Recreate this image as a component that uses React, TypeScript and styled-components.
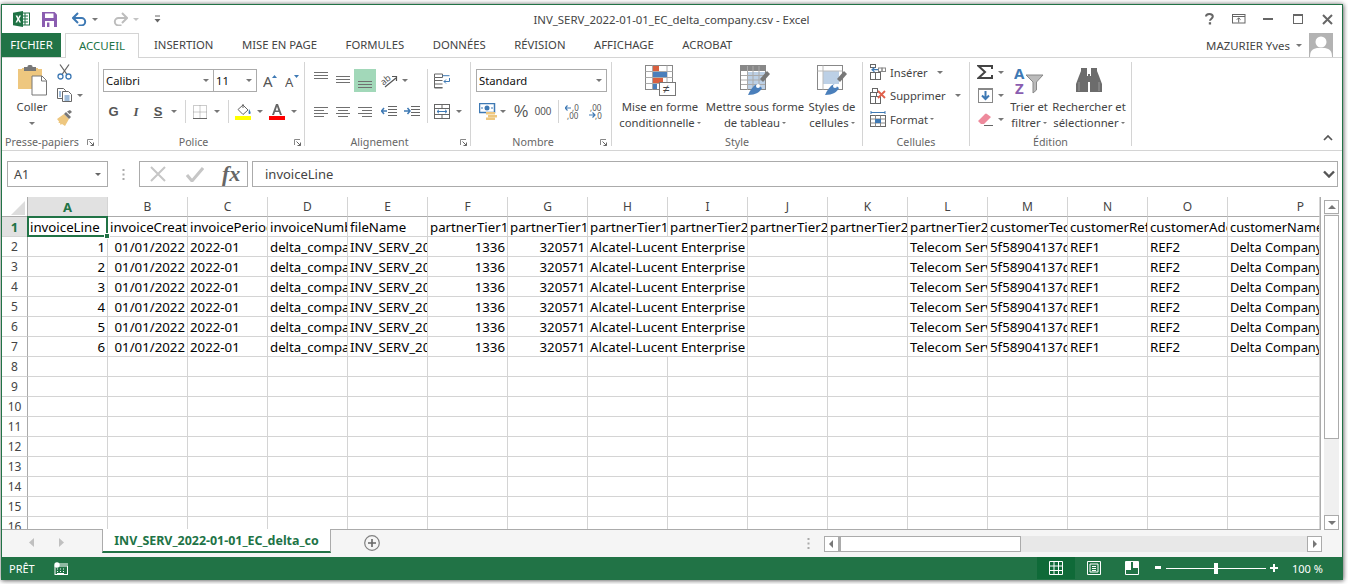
import React from "react";
import styled, { createGlobalStyle } from "styled-components";

const Global = createGlobalStyle`
  html, body { margin: 0; padding: 0; background: #fff; overflow: hidden; }
  body { font-family: "Noto Sans", "Open Sans", Arial, sans-serif; }
  * { box-sizing: border-box; }
`;

const GREEN = "#217346";
const LINE = "#d4d4d4";
const EDGE = "#ababab";

const Page = styled.div`width: 1348px; height: 584px; padding: 4px 5px 4px 1px; background: #fff;`;
const Win = styled.div`
  width: 1342px; height: 576px; border: 1px solid ${GREEN}; background: #fff;
  box-shadow: 0 0 5px rgba(0,0,0,.45), 1px 1px 4px rgba(0,0,0,.3);
  display: flex; flex-direction: column; overflow: hidden;
`;

/* ---------- title bar ---------- */
const TitleBar = styled.div`height: 28px; display: grid; grid-template-columns: 1fr auto 1fr; align-items: center; flex: none;`;
const Quick = styled.div`display: flex; align-items: center; padding-left: 8px;`;
const TitleText = styled.div`font-size: 11.4px; color: #444; padding-right: 1px; white-space: nowrap;`;
const WinBtns = styled.div`display: flex; justify-content: flex-end; align-items: center; padding-right: 0;`;

const Slot = styled.span<{ $w: number; $h?: number; $pt?: number; $pb?: number }>`
  width: ${p => p.$w}px; height: ${p => p.$h ?? 23}px; flex: none;
  padding-top: ${p => p.$pt ?? 0}px; padding-bottom: ${p => p.$pb ?? 0}px;
  display: inline-flex; align-items: center; justify-content: center; position: relative;
`;
const Highlight = styled(Slot)`background: #a2d8b9;`;
const Caret = styled.i<{ $c?: string; $ml?: number; $s?: number }>`
  display: inline-block; width: 0; height: 0; flex: none;
  margin-left: ${p => p.$ml ?? 0}px;
  border-left: ${p => p.$s ?? 3.5}px solid transparent; border-right: ${p => p.$s ?? 3.5}px solid transparent;
  border-top: ${p => p.$s ?? 3.5}px solid ${p => p.$c ?? "#777"};
`;
const VRule = styled.span<{ $h?: number }>`width: 1px; height: ${p => p.$h ?? 23}px; background: ${LINE}; flex: none;`;

/* ---------- tabs ---------- */
const TabBar = styled.div`height: 25px; flex: none; display: flex; align-items: flex-start; border-bottom: 1px solid ${LINE}; position: relative;`;
const FileTab = styled.div`width: 59px; height: 24px; padding-bottom: 1px; background: ${GREEN}; color: #fff; font-size: 11.3px; display: flex; align-items: center; justify-content: center; flex: none;`;
const ActiveTab = styled.div`
  width: 74px; height: 25px; padding-bottom: 2px; margin-left: 4px; margin-right: 15px; flex: none; background: #fff; color: ${GREEN};
  border: 1px solid ${LINE}; border-bottom: none; font-size: 11.5px; display: flex; align-items: center; justify-content: center;
  position: relative; z-index: 1;
`;
const Tab = styled.div`height: 24px; padding-bottom: 1px; margin-right: 28.5px; font-size: 11.3px; color: #444; display: flex; align-items: center; white-space: nowrap; flex: none;`;
const User = styled.div`margin-left: auto; display: flex; align-items: center; height: 24px; padding-right: 9px; font-size: 11.4px; color: #444;`;
const Avatar = styled.span`width: 24px; height: 24px; background: #b3b3b3; margin-left: 7px; display: block; overflow: hidden; flex: none;`;

/* ---------- ribbon ---------- */
const Ribbon = styled.div`height: 93px; flex: none; display: flex; border-bottom: 1px solid ${LINE}; align-items: flex-start;`;
const Group = styled.div<{ $w: number; $pl?: number }>`
  width: ${p => p.$w}px; height: 84px; margin-top: 4px; flex: none;
  border-right: 1px solid ${LINE}; padding-left: ${p => p.$pl ?? 0}px;
  display: flex; flex-direction: column;
`;
const GroupBody = styled.div<{ $pt?: number }>`flex: 1; display: flex; padding-top: ${p => p.$pt ?? 0}px; min-height: 0;`;
const Stack = styled.div<{ $gap?: number }>`display: flex; flex-direction: column; gap: ${p => p.$gap ?? 8}px; flex: none;`;
const Row = styled.div`display: flex; align-items: center; height: 23px; flex: none;`;
const MiniRow = styled.div`display: flex; align-items: center; height: 20px; flex: none;`;
const GroupLabel = styled.div<{ $ml?: number }>`
  height: 16px; margin-bottom: -4px; margin-left: ${p => p.$ml ?? 0}px; font-size: 10.7px; line-height: 16px; color: #666;
  display: grid; grid-template-columns: minmax(0, 1fr) auto minmax(0, 1fr); align-items: center; white-space: nowrap;
`;
const LabelText = styled.span<{ $mr?: number }>`margin-right: ${p => p.$mr ?? 0}px;`;
const Launcher = styled.span<{ $mr?: number }>`justify-self: end; margin-right: ${p => p.$mr ?? 4}px; width: 7px; height: 7px; display: block; line-height: 0;`;
const BigBtn = styled.div<{ $w: number }>`
  width: ${p => p.$w}px; flex: none; display: flex; flex-direction: column; align-items: center;
  font-size: 11.3px; line-height: 16px; color: #444; white-space: nowrap;
`;
const BigIcon = styled.div`height: 36px; display: flex; align-items: center; justify-content: center; flex: none;`;
const BigLine = styled.div<{ $mt?: number }>`display: flex; align-items: center; height: 16px; margin-top: ${p => p.$mt ?? 0}px;`;
const Combo = styled.div<{ $w: number; $ml?: number }>`
  width: ${p => p.$w}px; height: 23px; margin-left: ${p => p.$ml ?? 0}px; flex: none; border: 1px solid ${EDGE}; background: #fff;
  display: flex; align-items: center; justify-content: space-between; padding: 0 4px 0 2px;
  font-size: 11.3px; color: #111;
`;
const CellAction = styled.div`display: flex; align-items: center; height: 20px; font-size: 11.2px; color: #444; flex: none;`;
const ActionText = styled.span`margin-left: 4px; white-space: nowrap;`;
const Collapse = styled.div`margin-left: auto; margin-top: 77px; margin-right: 9px; line-height: 0; flex: none;`;

/* ---------- formula bar ---------- */
const FormulaBar = styled.div`height: 46px; flex: none; padding: 10px 4px 10px 5px; display: flex; align-items: stretch;`;
const NameBox = styled.div`width: 101px; border: 1px solid ${EDGE}; padding: 0 6px; display: flex; align-items: center; justify-content: space-between; font-size: 12.5px; color: #444; flex: none;`;
const Dots = styled.div`width: 31px; display: flex; align-items: center; justify-content: center; flex: none;`;
const FxBox = styled.div`width: 109px; border: 1px solid ${EDGE}; display: flex; align-items: center; flex: none; padding-left: 9px; gap: 19px;`;
const FxMark = styled.span`font-family: "Liberation Serif", serif; font-style: italic; font-weight: 700; font-size: 22px; color: #666; line-height: 1; margin-left: -1px;`;
const Input = styled.div`flex: 1; margin-left: 4px; border: 1px solid ${EDGE}; display: flex; align-items: center; justify-content: space-between; padding: 0 2px 0 12px; font-size: 13px; color: #444;`;

/* ---------- sheet ---------- */
const SheetArea = styled.div`flex: 1; min-height: 0; display: flex;`;
const Sheet = styled.div`
  width: 1319px; flex: none; overflow: hidden; border-right: 1px solid ${EDGE}; border-bottom: 1px solid ${EDGE};
  display: grid; grid-template-columns: 26px repeat(15, 80px) 92px; grid-auto-rows: 20px;
  font-size: 13.25px; color: #000; align-content: start;
`;
const Corner = styled.div`border-right: 1px solid ${EDGE}; border-bottom: 1px solid ${EDGE}; display: flex; align-items: flex-end; justify-content: flex-end; padding: 0 2px 1px 0;`;
const ColHead = styled.div<{ $on?: boolean; $pl?: number }>`
  border-right: 1px solid ${LINE}; border-bottom: 1px solid ${EDGE}; display: flex; align-items: center; justify-content: center;
  padding-left: ${p => p.$pl ?? 0}px;
  font-size: ${p => p.$on ? 13 : 12}px; color: ${p => p.$on ? GREEN : "#444"}; font-weight: ${p => p.$on ? 700 : 400}; background: ${p => p.$on ? "#e1e1e1" : "#fff"};
`;
const RowHead = styled.div<{ $on?: boolean }>`
  border-right: 1px solid ${EDGE}; border-bottom: 1px solid ${LINE}; display: flex; align-items: center; justify-content: center;
  font-size: ${p => p.$on ? 13 : 12}px; color: ${p => p.$on ? GREEN : "#444"}; font-weight: ${p => p.$on ? 700 : 400}; background: ${p => p.$on ? "#e1e1e1" : "#fff"};
`;
const Cell = styled.div<{ $right?: boolean; $span?: number; $sel?: boolean }>`
  grid-column: span ${p => p.$span ?? 1};
  border-right: 1px solid ${LINE}; border-bottom: 1px solid ${LINE}; overflow: hidden; white-space: nowrap;
  padding: 0 ${p => p.$right ? 2 : 0}px 0 ${p => p.$right ? 0 : 2}px; line-height: 20px;
  text-align: ${p => p.$right ? "right" : "left"};
  ${p => p.$sel && `overflow: visible; position: relative; z-index: 2;`}
`;
const LastCell = styled(Cell)`font-size: 12.8px;`;
const CellClip = styled.span`display: block; overflow: hidden;`;
const SelBox = styled.span`position: absolute; left: -1px; top: -1px; right: -1px; bottom: -1px; border: 2px solid ${GREEN}; pointer-events: none;`;
const SelHandle = styled.span`position: absolute; right: -3px; bottom: -3px; width: 6px; height: 6px; background: ${GREEN}; border: 1px solid #fff;`;

const VScroll = styled.div`width: 21px; flex: none; padding: 3px 3px 0 3px; display: flex; flex-direction: column; background: #fff;`;
const ScrollTrackV = styled.div`flex: 1; background: #f0f0f0; display: flex; flex-direction: column; width: 15px;`;
const ScrollBtn = styled.div<{ $w: number; $h: number }>`
  width: ${p => p.$w}px; height: ${p => p.$h}px; flex: none; background: #fff; border: 1px solid ${EDGE};
  display: flex; align-items: center; justify-content: center;
`;
const ThumbV = styled.div`height: 224px; margin-top: 1px; background: #fff; border: 1px solid ${EDGE}; flex: none;`;
const SpacerV = styled.div`flex: 1;`;

/* ---------- sheet tabs ---------- */
const TabsBar = styled.div`height: 27px; flex: none; background: #f5f5f5; display: flex; align-items: flex-start;`;
const NavArrows = styled.div`width: 100px; height: 24px; display: flex; align-items: center; padding-left: 26px; gap: 25px; flex: none;`;
const SheetTab = styled.div`
  width: 229px; height: 24px; margin-top: -1px; flex: none; background: #fff; border-left: 1px solid ${EDGE}; border-right: 1px solid ${EDGE};
  border-bottom: 2px solid ${GREEN}; color: ${GREEN}; font-weight: 700; font-size: 12.45px;
  display: flex; align-items: center; justify-content: center; white-space: nowrap;
`;
const AddSheet = styled.div`width: 84px; height: 26px; display: flex; align-items: center; padding-left: 33px; flex: none;`;
const Middle = styled.div`flex: 1; height: 26px; display: flex; align-items: center; justify-content: flex-end; padding-right: 14px;`;
const HScroll = styled.div`width: 498px; height: 16px; margin-top: 6px; margin-right: 20px; flex: none; background: #e8e8e8; display: flex; align-items: stretch;`;
const ThumbH = styled.div`width: 182px; background: #fff; border: 1px solid ${EDGE}; border-left-width: 2px; flex: none;`;
const SpacerH = styled.div`flex: 1;`;

/* ---------- status bar ---------- */
const Status = styled.div`height: 22px; flex: none; background: ${GREEN}; color: #fff; display: flex; align-items: center; padding-left: 7px; font-size: 11px;`;
const StatusRight = styled.div`margin-left: auto; display: flex; align-items: center; height: 22px;`;
const ViewBtn = styled.div<{ $on?: boolean }>`width: 38px; height: 22px; display: flex; align-items: center; justify-content: center; background: ${p => p.$on ? "#0f6a38" : "transparent"}; flex: none;`;
const SliderTrack = styled.div`width: 100px; height: 1px; background: #fff; position: relative; flex: none; margin: 0 4px;`;
const SliderThumb = styled.span`position: absolute; left: 48px; top: -5px; width: 4px; height: 11px; background: #fff;`;
const ZoomPct = styled.span`width: 64px; padding-left: 14px; font-size: 11px; white-space: nowrap;`;

/* ---------- icons ---------- */
const Svg = ({ w, h, children }: { w: number; h: number; children: React.ReactNode }) => (
  <svg width={w} height={h} viewBox={`0 0 ${w} ${h}`} fill="none" style={{ display: "block", flex: "none" }}>{children}</svg>
);

const ExcelLogo = () => (
  <Svg w={17} h={16}>
    <rect x="7" y="2" width="9.5" height="12" fill="#fff" stroke="#1f7244" />
    <path d="M9 5h6M9 8h6M9 11h6M12 2v12" stroke="#1f7244" />
    <path d="M0 1.8 10 0v16L0 14.2z" fill="#1f7244" />
    <path d="M2.6 4.6h1.8L5.3 6.7 6.3 4.6H8L6.2 8 8 11.4H6.3L5.2 9.2 4.2 11.4H2.5L4.4 8z" fill="#fff" />
  </Svg>
);
const SaveIcon = () => (
  <Svg w={15} h={15}>
    <path d="M0 0h12.5L15 2.5V15H0z" fill="#8a5db0" />
    <rect x="3" y="1.5" width="8.5" height="4.5" fill="#fff" />
    <rect x="3" y="9" width="9" height="6" fill="#fff" />
    <rect x="5" y="10.5" width="2.4" height="4.5" fill="#8a5db0" />
  </Svg>
);
const UndoIcon = ({ c, flip }: { c: string; flip?: boolean }) => (
  <Svg w={15} h={14}>
    <g transform={flip ? "translate(15 0) scale(-1 1)" : undefined}>
      <path d="M2 6h7.5a3.7 3.7 0 0 1 0 7.4H6.5" stroke={c} strokeWidth="2" />
      <path d="M6 1 1 6l5 5" stroke={c} strokeWidth="2" />
    </g>
  </Svg>
);
const Custom = () => (
  <Svg w={7} h={8}><path d="M1 1h5" stroke="#666" /><path d="M.5 4h6L3.5 7.5z" fill="#666" /></Svg>
);
const HelpMark = () => (
  <Svg w={9} h={12}><path d="M1 3.5C1 1.8 2.5 1 4.3 1 6.3 1 7.8 2 7.8 3.6c0 2-2.8 2.2-2.8 4.2" stroke="#666" strokeWidth="2" /><rect x="3.8" y="9.2" width="2.3" height="2.3" fill="#666" /></Svg>
);
const RibbonMode = () => (
  <Svg w={14} h={10}><rect x=".5" y=".5" width="12.5" height="8.5" stroke="#666" /><path d="M1 2.5h12" stroke="#666" /><path d="M6.7 8.5V4M4.8 5.7l1.9-1.9 1.9 1.9" stroke="#666" /></Svg>
);
const MinIcon = () => <Svg w={10} h={3}><rect y="0" width="10" height="2" fill="#666" /></Svg>;
const MaxIcon = () => <Svg w={10} h={10}><rect x=".5" y=".5" width="9" height="9" stroke="#666" /><rect x="0" y="0" width="10" height="2" fill="#666" /></Svg>;
const CloseIcon = () => <Svg w={11} h={11}><path d="m1 1 9 9M10 1l-9 9" stroke="#666" strokeWidth="2" /></Svg>;
const AvatarArt = () => (
  <svg width="24" height="24" viewBox="0 0 24 24" style={{ display: "block" }}>
    <circle cx="12" cy="9" r="5.5" fill="#fff" /><path d="M1 24c0-6 2-8 7-9h8c5 1 7 3 7 9z" fill="#fff" />
  </svg>
);

const PasteIcon = () => (
  <Svg w={29} h={31}>
    <path d="M0 4h4v-1h16v1h4v20H0z" fill="#eec77f" />
    <rect x="6" y="2" width="12" height="4" fill="#777" /><rect x="9.5" y="0" width="5" height="3.5" rx="1.5" fill="#777" />
    <path d="M14 11h10l4.500 4.500V30H14z" fill="#fff" stroke="#777" />
    <path d="M23.500 11v5h5" stroke="#777" />
  </Svg>
);
const Scissors = () => (
  <Svg w={15} h={16}>
    <path d="M3 .5 10 10.500M12 .500 5 10.500" stroke="#666" strokeWidth="1.3" />
    <circle cx="3.500" cy="12.500" r="2.500" stroke="#3e79b4" strokeWidth="1.3" /><circle cx="11.500" cy="12.500" r="2.500" stroke="#3e79b4" strokeWidth="1.3" />
  </Svg>
);
const CopyIcon = () => (
  <Svg w={15} h={14}>
    <path d="M.5.5h6l2 2v8H.5z" fill="#fff" stroke="#666" />
    <path d="M5.500 3.500h6l3 3v7h-9z" fill="#fff" stroke="#666" />
    <path d="M2 4h2M2 6h2M2 8h2M7.500 8h5M7.500 10h5M7.500 12h5" stroke="#3e79b4" />
  </Svg>
);
const Brush = () => (
  <Svg w={16} h={16}>
    <path d="M0 9 7 4l5 5-4 7-3-2-1.500 1-.5-2-1.500 0 .5-1.500z" fill="#eec77f" />
    <path d="m7 4 5 5 2-2-5-5z" fill="#777" /><path d="m10 1.500 2.500 2.500 2.500-2L13 0z" fill="#777" />
  </Svg>
);
const BigA = ({ s, dir }: { s: number; dir: "up" | "down" }) => (
  <Svg w={15} h={14}>
    <text x="0" y="13" fontSize={s} fill="#555" fontFamily="Noto Sans, sans-serif">A</text>
    <path d={dir === "up" ? "M9 4l2.500-3L14 4z" : "M9 1h5l-2.500 3z"} fill="#3e79b4" />
  </Svg>
);
const Glyph = styled.span<{ $i?: boolean; $u?: boolean }>`
  font-size: 13px; font-weight: 700; color: #555; line-height: 1;
  font-style: ${p => p.$i ? "italic" : "normal"}; text-decoration: ${p => p.$u ? "underline" : "none"};
  font-family: ${p => p.$i ? '"Liberation Serif", serif' : '"Liberation Sans", Arial, sans-serif'};
`;
const BorderIcon = () => (
  <Svg w={14} h={14}><path d="M.5.500h13v13H.5zM7 .5v13M.5 7h13" stroke="#999" strokeDasharray="1 1" /><path d="M0 13.500h14" stroke="#666" /></Svg>
);
const FillIcon = () => (
  <Svg w={17} h={17}>
    <path d="M3 6.500 8 2l5 5-5 4.500z" fill="#fff" stroke="#666" /><path d="M8 1v4" stroke="#666" />
    <path d="M14 6c1 2 2 3 1.500 4.500-.7 1-2 .500-2-.7z" fill="#3e79b4" />
    <rect y="13" width="16" height="4" fill="#ffff00" />
  </Svg>
);
const FontColor = () => (
  <Svg w={16} h={17}>
    <path d="M3 12 7 1h2l4 11h-2l-1-3H6l-1 3zM6.700 7.500h2.600L8 3.500z" fill="#666" />
    <rect y="13" width="16" height="4" fill="#ff0000" />
  </Svg>
);
const Lines = ({ ws, dy = 3, c = "#707070" }: { ws: [number, number][]; dy?: number; c?: string }) => (
  <Svg w={15} h={Math.ceil((ws.length - 1) * dy + 1)}>
    {ws.map(([x, w], i) => <path key={i} d={`M${x} ${i * dy + .5}h${w}`} stroke={c} />)}
  </Svg>
);
const LinesV: [number, number][] = [[0, 14], [0, 14], [0, 14]];
const LinesLeft: [number, number][] = [[0, 14], [0, 10], [0, 14], [0, 10]];
const LinesCenter: [number, number][] = [[0, 14], [2, 10], [0, 14], [2, 10]];
const LinesRight: [number, number][] = [[0, 14], [4, 10], [0, 14], [4, 10]];
const Orient = () => (
  <Svg w={17} h={16}>
    <text x="0" y="10" fontSize="9" fill="#555" transform="rotate(-40 5 8)" fontFamily="Noto Sans, sans-serif">ab</text>
    <path d="M4 14 15 5M11 3.500h4.500V8" stroke="#555" strokeWidth="1.200" />
  </Svg>
);
const Indent = ({ rev }: { rev?: boolean }) => (
  <Svg w={16} h={11}>
    {rev
      ? <><path d="M7 .5h9M7 3.500h9M7 6.500h9M7 9.500h9" stroke="#666" /><path d="M0 5h6M3 2 .5 5 3 8" stroke="#3e79b4" strokeWidth="1.500" /></>
      : <><path d="M7 .5h9M7 3.500h9M7 6.500h9M7 9.500h9" stroke="#666" /><path d="M0 5h6M3.500 2 6 5 3.500 8" stroke="#3e79b4" strokeWidth="1.500" /></>}
  </Svg>
);
const WrapIcon = () => (
  <Svg w={16} h={16}>
    <path d="M.5 1h8v3.500h-8zM.5 7.500h8M.5 11h8M.5 14.500h8" stroke="#666" /><path d="M.5 4.500v10.500h8" stroke="#666" />
    <path d="M8.500 2.700h7" stroke="#3e79b4" />
    <path d="M15.500 5v3.500H10M12 6.500l-2 2 2 2" stroke="#3e79b4" />
  </Svg>
);
const MergeIcon = () => (
  <Svg w={16} h={15}>
    <rect x=".5" y=".5" width="15" height="14" stroke="#666" /><path d="M.5 4.500h15M.5 10.500h15M8 .5v4M8 10.500v4" stroke="#666" />
    <path d="M3 7.500h10M5 5.800 3 7.500l2 1.700M11 5.800l2 1.700-2 1.700" stroke="#3e79b4" />
  </Svg>
);
const Currency = () => (
  <Svg w={18} h={17}>
    <rect x=".5" y=".5" width="15" height="9" stroke="#3e79b4" strokeWidth="1.500" />
    <circle cx="8" cy="5" r="2.500" fill="#3e79b4" /><path d="M2 5h2M12 5h2" stroke="#3e79b4" />
    <rect x="7" y="9" width="9" height="2.500" fill="#eec77f" /><rect x="9" y="12" width="9" height="2.500" fill="#eec77f" /><rect x="7" y="14.500" width="9" height="2.500" fill="#eec77f" />
  </Svg>
);
const PctText = styled.span`font-size: 16px; color: #555; line-height: 1; font-family: "Liberation Sans", sans-serif;`;
const ThouText = styled.span`font-size: 10px; color: #555; line-height: 1; font-family: "Liberation Sans", sans-serif;`;
const DecIcon = ({ inc }: { inc?: boolean }) => (
  <Svg w={16} h={16}>
    <text x={inc ? 7 : 2} y="7" fontSize="8" fill="#555" fontFamily="Noto Sans, sans-serif">{inc ? ",0" : ",00"}</text>
    <text x={inc ? 2 : 7} y="15" fontSize="8" fill="#555" fontFamily="Noto Sans, sans-serif">{inc ? ",00" : ",0"}</text>
    {inc
      ? <path d="M0 4h6M2.500 1.500 0 4l2.500 2.500" stroke="#3e79b4" strokeWidth="1.200" />
      : <path d="M1 11h6M4.500 8.500 7 11l-2.500 2.500" stroke="#3e79b4" strokeWidth="1.200" />}
  </Svg>
);
const CondFmt = () => (
  <Svg w={31} h={31}>
    <rect x=".5" y=".5" width="27" height="24" fill="#fff" stroke="#888" />
    <path d="M.5 6.500h27M.5 12.500h27M.5 18.500h27M7.500.5v24M22 .5v24" stroke="#aaa" />
    <rect x="8" y="1" width="6" height="5" fill="#d9603f" /><rect x="8" y="7" width="14" height="5" fill="#4a7fbb" />
    <rect x="8" y="13" width="10" height="5" fill="#d9603f" /><rect x="8" y="19" width="4" height="5" fill="#4a7fbb" />
    <rect x="14.500" y="17.500" width="16" height="13" fill="#fff" stroke="#777" />
    <text x="18" y="28" fontSize="12" fill="#444" fontFamily="Liberation Sans, sans-serif">≠</text>
  </Svg>
);
const TableFmt = ({ plain }: { plain?: boolean }) => (
  <Svg w={30} h={31}>
    <rect x=".5" y=".5" width="25" height="24" fill="#fff" stroke="#888" />
    {plain
      ? <><rect x="6" y="6" width="16" height="13" fill="#bcd0e6" /><path d="M.5 6h25M6 .5v24" stroke="#bbb" /></>
      : <><rect x="1" y="1" width="24" height="5" fill="#888" /><rect x="8" y="7" width="17" height="17" fill="#bcd0e6" /><path d="M1 10.500h24M1 15h24M1 19.500h24M7.500 1v24M13 1v24M19 1v24" stroke="#aaa" /></>}
    <path d="M20 14 27 6l3 3-7 8z" fill="#777" />
    <path d="M8 30c2-5 5-9 9-11l5 4c-2 4-6 7-14 7z" fill="#4a7fbb" />
    <circle cx="18" cy="21" r="2" fill="#fff" />
  </Svg>
);
const InsertIcon = () => (
  <Svg w={16} h={16}>
    <rect x=".5" y="8.500" width="5" height="7" stroke="#666" /><rect x="5.500" y="8.500" width="5" height="7" stroke="#666" />
    <rect x=".5" y=".5" width="5" height="3" stroke="#666" /><rect x="8.500" y="4" width="3.500" height="3.500" stroke="#888" /><rect x="12" y="4" width="3.500" height="3.500" stroke="#888" />
    <path d="M2 5.700h6M4.500 3.500 2 5.700l2.500 2.200" stroke="#3e79b4" strokeWidth="1.200" />
  </Svg>
);
const DeleteIcon = () => (
  <Svg w={16} h={16}>
    <rect x=".5" y="8.500" width="5" height="7" stroke="#666" /><rect x="5.500" y="8.500" width="5" height="7" stroke="#666" />
    <rect x="2.500" y=".5" width="5" height="4" stroke="#666" /><rect x=".5" y="4.500" width="6" height="4" stroke="#666" />
    <path d="m8 3 7 7M15 3l-7 7" stroke="#e0604c" strokeWidth="1.800" />
  </Svg>
);
const FormatIcon = () => (
  <Svg w={16} h={16}>
    <rect x=".5" y="4.500" width="15" height="11" fill="#fff" stroke="#666" /><path d="M.5 8h15M.5 12h15M5.500 4.500v11M10.500 4.500v11" stroke="#888" />
    <rect x="5" y="8" width="6" height="4" fill="#3e79b4" />
    <path d="M1 1.500h14" stroke="#3e79b4" /><path d="M1 0v3M15 0v3" stroke="#3e79b4" />
  </Svg>
);
const Sigma = () => <Svg w={16} h={14}><path d="M15 4V1H1.500L8 7 1.500 13H15v-3" stroke="#444" strokeWidth="2" /></Svg>;
const FillDown = () => (
  <Svg w={15} h={15}>
    <rect x=".5" y=".5" width="14" height="14" fill="#fff" stroke="#888" /><path d="M0 1h15" stroke="#888" strokeWidth="2" />
    <path d="M7.500 3v8M4 7.500 7.500 11 11 7.500" stroke="#3e79b4" strokeWidth="2" />
  </Svg>
);
const Eraser = () => (
  <Svg w={15} h={13}>
    <path d="M0 8 7 1a1.500 1.500 0 0 1 2 0l4 3-7 7H3z" fill="#ee8a9c" />
    <path d="M6 12.500h9" stroke="#666" />
  </Svg>
);
const SortIcon = () => (
  <Svg w={30} h={27}>
    <text x="0" y="12" fontSize="15" fontWeight="700" fill="#3e79b4" fontFamily="Noto Sans, sans-serif">A</text>
    <text x="1" y="27" fontSize="15" fontWeight="700" fill="#8a5db0" fontFamily="Noto Sans, sans-serif">Z</text>
    <path d="M12 8h17l-6.500 7v8l-3.500 3V15z" fill="#bbb" stroke="#888" />
  </Svg>
);
const Binoculars = () => (
  <Svg w={26} h={24}>
    <path d="M3 8 5 3V0h6v8h1v-2h2v2h1V0h6v3l2 5 3 8v8H14V14h-2v10H0v-8z" fill="#6c6c6c" />
    <path d="M3 14v9M23 14v9" stroke="#999" />
  </Svg>
);
const Launch = () => <Svg w={7} h={7}><path d="M.5 6V.5H6" stroke="#888" /><path d="M2.500 2.500 6.500 6.500M6.500 3.500v3h-3" stroke="#666" /></Svg>;
const ChevUp = () => <Svg w={10} h={6}><path d="m1 5 4-4 4 4" stroke="#555" strokeWidth="1.700" /></Svg>;
const ChevDown = () => <Svg w={12} h={8}><path d="m1 1.500 5 5 5-5" stroke="#555" strokeWidth="2.400" /></Svg>;
const Mark = ({ kind }: { kind: "x" | "v" }) => (
  <Svg w={18} h={16}>
    {kind === "x" ? <path d="m2 1 14 14M16 1 2 15" stroke="#c6c6c6" strokeWidth="2" /> : <path d="m1 9 5 6L17 2" stroke="#c6c6c6" strokeWidth="3" />}
  </Svg>
);
const VDots = () => <Svg w={3} h={11}><path d="M.5 0h2v2h-2zM.5 4.500h2v2h-2zM.5 9h2v2h-2z" fill="#aaa" /></Svg>;
const CornerTri = () => <Svg w={14} h={14}><path d="M14 0v14H0z" fill="#dcdcdc" /></Svg>;
const TriBtn = ({ d }: { d: "u" | "d" | "l" | "r" }) => {
  const p = { u: "M1 5 5 1l4 4z", d: "M1 1h8L5 5z", l: "M6 1v8L2 5z", r: "M3 1v8l4-4z" }[d];
  return <Svg w={10} h={10 - (d === "u" || d === "d" ? 4 : 0)}><path d={p} fill="#777" /></Svg>;
};
const NavArrow = ({ r }: { r?: boolean }) => <Svg w={6} h={9}><path d={r ? "M0 0v9l5-4.500z" : "M6 0v9L1 4.500z"} fill="#c0c0c0" /></Svg>;
const PlusCircle = () => <Svg w={16} h={16}><circle cx="8" cy="8" r="7.300" stroke="#808080" strokeWidth="1.200" /><path d="M4 8h8M8 4v8" stroke="#666" strokeWidth="1.600" /></Svg>;
const MacroIcon = () => (
  <Svg w={14} h={13}>
    <circle cx="3" cy="3" r="2.700" fill="#fff" /><rect x="1" y="4" width="12.500" height="8.500" fill="none" stroke="#fff" /><path d="M5 2h9" stroke="#fff" />
    <path d="M3 7h1M6 7h1M9 7h1M3 9.500h1M6 9.500h1M9 9.500h1M3 11.500h7" stroke="#fff" />
  </Svg>
);
const ViewNormal = () => <Svg w={14} h={14}><path d="M.5.500h13v13H.5zM5 .5v13M9.500.5v13M.5 5h13M.5 9.500h13" stroke="#fff" /></Svg>;
const ViewPage = () => <Svg w={14} h={14}><path d="M.5.500h13v13H.5z" stroke="#fff" /><path d="M3 3h8v8H3zM5 5.500h4M5 7.500h4M5 9.500h4" stroke="#fff" /></Svg>;
const ViewBreak = () => <Svg w={14} h={14}><path d="M.5.500h13v13H.5z" stroke="#fff" /><rect x="1" y="1" width="5" height="8" fill="#fff" /><rect x="8" y="1" width="5" height="6" fill="#fff" /></Svg>;
const ZoomOut = () => <Svg w={8} h={4}><rect x="1" y="0" width="6" height="3" fill="#fff" /></Svg>;
const ZoomIn = () => <Svg w={8} h={8}><path d="M0 3h8v2H0zM3 0h2v8H3z" fill="#fff" /></Svg>;

/* ---------- data ---------- */
const COLS = "ABCDEFGHIJKLMNOP".split("");
const HEAD = ["invoiceLine", "invoiceCreati", "invoicePeriod", "invoiceNumb", "fileName", "partnerTier1", "partnerTier1", "partnerTier1", "partnerTier2", "partnerTier2", "partnerTier2", "partnerTier2", "customerTech", "customerRef", "customerAdd"];

const App = () => (
  <Page>
    <Global />
    <Win>
      <TitleBar>
        <Quick>
          <Slot $w={22}><ExcelLogo /></Slot>
          <Slot $w={10} />
          <Slot $w={15}><SaveIcon /></Slot>
          <Slot $w={15} />
          <Slot $w={15}><UndoIcon c="#3e79b4" /></Slot>
          <Slot $w={15}><Caret $s={3} /></Slot>
          <Slot $w={11} />
          <Slot $w={15}><UndoIcon c="#bdbdbd" flip /></Slot>
          <Slot $w={15}><Caret $s={3} $c="#c4c4c4" /></Slot>
          <Slot $w={11} />
          <Slot $w={7}><Custom /></Slot>
        </Quick>
        <TitleText>INV_SERV_2022-01-01_EC_delta_company.csv - Excel</TitleText>
        <WinBtns>
          <Slot $w={29}><HelpMark /></Slot>
          <Slot $w={29}><RibbonMode /></Slot>
          <Slot $w={30}><MinIcon /></Slot>
          <Slot $w={29}><MaxIcon /></Slot>
          <Slot $w={30}><CloseIcon /></Slot>
        </WinBtns>
      </TitleBar>

      <TabBar>
        <FileTab>FICHIER</FileTab>
        <ActiveTab>ACCUEIL</ActiveTab>
        {["INSERTION", "MISE EN PAGE", "FORMULES", "DONNÉES", "RÉVISION", "AFFICHAGE", "ACROBAT"].map(t => <Tab key={t}>{t}</Tab>)}
        <User>MAZURIER Yves<Caret $s={3} $ml={6} /><Avatar><AvatarArt /></Avatar></User>
      </TabBar>

      <Ribbon>
        <Group $w={97} $pl={6}>
          <GroupBody>
            <BigBtn $w={48}>
              <BigIcon><PasteIcon /></BigIcon>
              <BigLine $mt={1}>Coller</BigLine>
              <BigLine><Caret $s={3} /></BigLine>
            </BigBtn>
            <Stack $gap={3}>
              <MiniRow><Slot $w={17} $h={20}><Scissors /></Slot></MiniRow>
              <MiniRow><Slot $w={17} $h={20}><CopyIcon /></Slot><Slot $w={14} $h={20}><Caret $s={3} /></Slot></MiniRow>
              <MiniRow><Slot $w={17} $h={20}><Brush /></Slot></MiniRow>
            </Stack>
          </GroupBody>
          <GroupLabel $ml={-6}><span /><LabelText $mr={16}>Presse-papiers</LabelText><Launcher><Launch /></Launcher></GroupLabel>
        </Group>

        <Group $w={206} $pl={4}>
          <GroupBody $pt={7}>
            <Stack>
              <Row>
                <Combo $w={111}>Calibri<Caret $s={3} /></Combo>
                <Combo $w={44} $ml={-1}>11<Caret $s={3} /></Combo>
                <Slot $w={26}><BigA s={15} dir="up" /></Slot>
                <Slot $w={18}><BigA s={13} dir="down" /></Slot>
              </Row>
              <Row>
                <Slot $w={21}><Glyph>G</Glyph></Slot>
                <Slot $w={24}><Glyph $i>I</Glyph></Slot>
                <Slot $w={20}><Glyph $u>S</Glyph></Slot>
                <Slot $w={12}><Caret $s={3} /></Slot>
                <Slot $w={5} />
                <VRule />
                <Slot $w={27}><BorderIcon /></Slot>
                <Slot $w={8}><Caret $s={3} /></Slot>
                <Slot $w={7} />
                <VRule />
                <Slot $w={28}><FillIcon /></Slot>
                <Slot $w={6}><Caret $s={3} /></Slot>
                <Slot $w={28}><FontColor /></Slot>
                <Slot $w={6}><Caret $s={3} /></Slot>
              </Row>
            </Stack>
          </GroupBody>
          <GroupLabel $ml={-4}><span /><LabelText $mr={16}>Police</LabelText><Launcher $mr={3}><Launch /></Launcher></GroupLabel>
        </Group>

        <Group $w={166} $pl={5}>
          <GroupBody $pt={7}>
            <Stack>
              <Row>
                <Slot $w={22} $pb={11}><Lines ws={LinesV} /></Slot>
                <Slot $w={22} $pb={3}><Lines ws={LinesV} /></Slot>
                <Highlight $w={22} $pt={7}><Lines ws={LinesV} /></Highlight>
                <Slot $w={26}><Orient /></Slot>
                <Slot $w={6}><Caret $s={3} /></Slot>
                <Slot $w={19} />
              </Row>
              <Row>
                <Slot $w={22}><Lines ws={LinesLeft} /></Slot>
                <Slot $w={22}><Lines ws={LinesCenter} /></Slot>
                <Slot $w={22}><Lines ws={LinesRight} /></Slot>
                <Slot $w={26}><Indent rev /></Slot>
                <Slot $w={20}><Indent /></Slot>
                <Slot $w={5} />
              </Row>
            </Stack>
            <VRule $h={54} />
            <Stack>
              <Row><Slot $w={27}><WrapIcon /></Slot></Row>
              <Row><Slot $w={27}><MergeIcon /></Slot><Slot $w={8}><Caret $s={3} /></Slot></Row>
            </Stack>
          </GroupBody>
          <GroupLabel $ml={-5}><span /><LabelText $mr={16}>Alignement</LabelText><Launcher $mr={3}><Launch /></Launcher></GroupLabel>
        </Group>

        <Group $w={141} $pl={5}>
          <GroupBody $pt={7}>
            <Stack>
              <Row><Combo $w={131}>Standard<Caret $s={3} /></Combo></Row>
              <Row>
                <Slot $w={23}><Currency /></Slot>
                <Slot $w={8}><Caret $s={3} /></Slot>
                <Slot $w={28}><PctText>%</PctText></Slot>
                <Slot $w={16}><ThouText>000</ThouText></Slot>
                <Slot $w={7} />
                <VRule />
                <Slot $w={28}><DecIcon inc /></Slot>
                <Slot $w={17}><DecIcon /></Slot>
              </Row>
            </Stack>
          </GroupBody>
          <GroupLabel $ml={-5}><span /><LabelText $mr={16}>Nombre</LabelText><Launcher><Launch /></Launcher></GroupLabel>
        </Group>

        <Group $w={251}>
          <GroupBody>
            <BigBtn $w={96}>
              <BigIcon><CondFmt /></BigIcon>
              <BigLine $mt={1}>Mise en forme</BigLine>
              <BigLine>conditionnelle<Caret $s={2.5} $ml={2} /></BigLine>
            </BigBtn>
            <BigBtn $w={94}>
              <BigIcon><TableFmt /></BigIcon>
              <BigLine $mt={1}>Mettre sous forme</BigLine>
              <BigLine>de tableau<Caret $s={2.5} $ml={2} /></BigLine>
            </BigBtn>
            <BigBtn $w={60}>
              <BigIcon><TableFmt plain /></BigIcon>
              <BigLine $mt={1}>Styles de</BigLine>
              <BigLine>cellules<Caret $s={2.5} $ml={2} /></BigLine>
            </BigBtn>
          </GroupBody>
          <GroupLabel><span /><span>Style</span><span /></GroupLabel>
        </Group>

        <Group $w={107} $pl={7}>
          <GroupBody>
            <Stack $gap={3.5}>
              <CellAction><InsertIcon /><ActionText>Insérer</ActionText><Caret $s={3} $ml={9} /></CellAction>
              <CellAction><DeleteIcon /><ActionText>Supprimer</ActionText><Caret $s={3} $ml={9} /></CellAction>
              <CellAction><FormatIcon /><ActionText>Format</ActionText><Caret $s={2.5} $ml={2} /></CellAction>
            </Stack>
          </GroupBody>
          <GroupLabel $ml={-7}><span /><span>Cellules</span><span /></GroupLabel>
        </Group>

        <Group $w={162} $pl={6}>
          <GroupBody>
            <Stack $gap={3.5}>
              <MiniRow><Slot $w={18} $h={20}><Sigma /></Slot><Slot $w={14} $h={20}><Caret $s={3} /></Slot></MiniRow>
              <MiniRow><Slot $w={18} $h={20}><FillDown /></Slot><Slot $w={14} $h={20}><Caret $s={3} /></Slot></MiniRow>
              <MiniRow><Slot $w={18} $h={20}><Eraser /></Slot><Slot $w={14} $h={20}><Caret $s={3} /></Slot></MiniRow>
            </Stack>
            <BigBtn $w={42}>
              <BigIcon><SortIcon /></BigIcon>
              <BigLine $mt={1}>Trier et</BigLine>
              <BigLine>filtrer<Caret $s={2.5} $ml={2} /></BigLine>
            </BigBtn>
            <BigBtn $w={78}>
              <BigIcon><Binoculars /></BigIcon>
              <BigLine $mt={1}>Rechercher et</BigLine>
              <BigLine>sélectionner<Caret $s={2.5} $ml={2} /></BigLine>
            </BigBtn>
          </GroupBody>
          <GroupLabel $ml={-6}><span /><span>Édition</span><span /></GroupLabel>
        </Group>

        <Collapse><ChevUp /></Collapse>
      </Ribbon>

      <FormulaBar>
        <NameBox>A1<Caret $s={3.5} $c="#666" /></NameBox>
        <Dots><VDots /></Dots>
        <FxBox><Mark kind="x" /><Mark kind="v" /><FxMark>fx</FxMark></FxBox>
        <Input>invoiceLine<ChevDown /></Input>
      </FormulaBar>

      <SheetArea>
        <Sheet>
          <Corner><CornerTri /></Corner>
          {COLS.map((c, i) => <ColHead key={c} $on={i === 0} $pl={c === "P" ? 54 : 0}>{c}</ColHead>)}
          <RowHead $on>1</RowHead>
          {HEAD.map((h, i) => (
            <Cell key={i} $sel={i === 0}>
              <CellClip>{h}</CellClip>
              {i === 0 && <SelBox />}
              {i === 0 && <SelHandle />}
            </Cell>
          ))}
          <LastCell>customerName</LastCell>
          {[1, 2, 3, 4, 5, 6].map(n => (
            <React.Fragment key={n}>
              <RowHead>{n + 1}</RowHead>
              <Cell $right>{n}</Cell>
              <Cell $right>01/01/2022</Cell>
              <Cell>2022-01</Cell>
              <Cell>delta_company</Cell>
              <Cell>INV_SERV_2022</Cell>
              <Cell $right>1336</Cell>
              <Cell $right>320571</Cell>
              <Cell $span={2}>Alcatel-Lucent Enterprise</Cell>
              <Cell />
              <Cell />
              <Cell>Telecom Serv</Cell>
              <Cell>5f58904137d</Cell>
              <Cell>REF1</Cell>
              <Cell>REF2</Cell>
              <LastCell>Delta Company</LastCell>
            </React.Fragment>
          ))}
          {Array.from({ length: 9 }, (_, r) => (
            <React.Fragment key={r}>
              <RowHead>{r + 8}</RowHead>
              {COLS.map(c => <Cell key={c} />)}
            </React.Fragment>
          ))}
        </Sheet>
        <VScroll>
          <ScrollTrackV>
            <ScrollBtn $w={15} $h={14}><TriBtn d="u" /></ScrollBtn>
            <ThumbV />
            <SpacerV />
            <ScrollBtn $w={15} $h={15}><TriBtn d="d" /></ScrollBtn>
          </ScrollTrackV>
        </VScroll>
      </SheetArea>

      <TabsBar>
        <NavArrows><NavArrow /><NavArrow r /></NavArrows>
        <SheetTab>INV_SERV_2022-01-01_EC_delta_co</SheetTab>
        <AddSheet><PlusCircle /></AddSheet>
        <Middle><VDots /></Middle>
        <HScroll>
          <ScrollBtn $w={15} $h={16}><TriBtn d="l" /></ScrollBtn>
          <ThumbH />
          <SpacerH />
          <ScrollBtn $w={15} $h={16}><TriBtn d="r" /></ScrollBtn>
        </HScroll>
      </TabsBar>

      <Status>
        PRÊT
        <Slot $w={19} $h={22} />
        <MacroIcon />
        <StatusRight>
          <ViewBtn $on><ViewNormal /></ViewBtn>
          <ViewBtn><ViewPage /></ViewBtn>
          <ViewBtn><ViewBreak /></ViewBtn>
          <Slot $w={3} $h={22} />
          <ZoomOut />
          <SliderTrack><SliderThumb /></SliderTrack>
          <ZoomIn />
          <ZoomPct>100 %</ZoomPct>
        </StatusRight>
      </Status>
    </Win>
  </Page>
);

export default App;
